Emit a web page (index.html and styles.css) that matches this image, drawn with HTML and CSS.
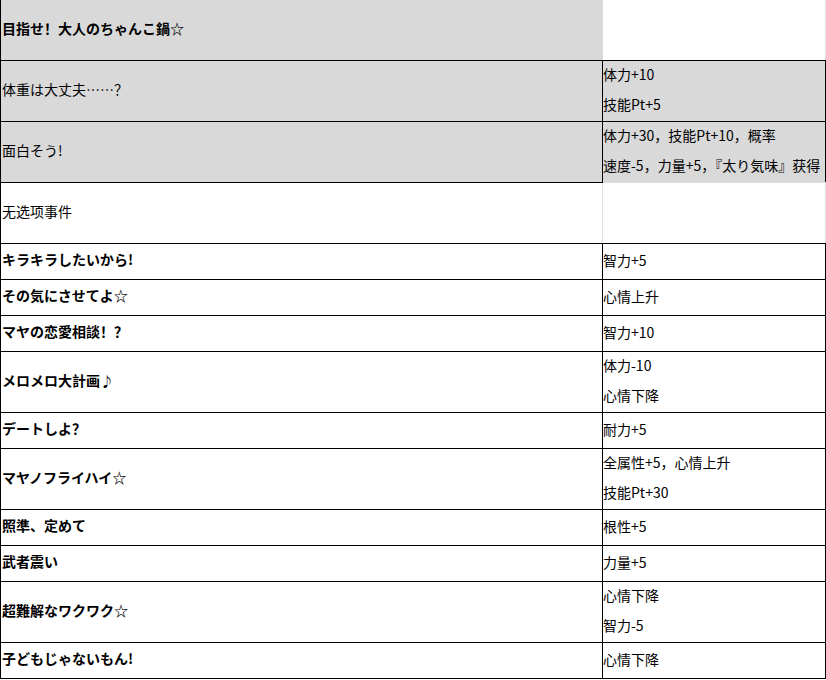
FILE: index.html
```html
<!DOCTYPE html>
<html lang="zh">
<head>
<meta charset="utf-8">
<title>イベント選択肢</title>
<link rel="stylesheet" href="styles.css">
</head>
<body>
<table class="tbl">
  <colgroup><col class="c1"><col class="c2"></colgroup>
  <tr class="dbl">
    <td class="name b gray first-l">目指せ！大人のちゃんこ鍋☆</td>
    <td class="eff first-r"></td>
  </tr>
  <tr class="dbl">
    <td class="name gray">体重は大丈夫……？</td>
    <td class="eff gray"><div class="ln">体力+10</div><div class="ln">技能Pt+5</div></td>
  </tr>
  <tr class="dbl">
    <td class="name gray">面白そう!</td>
    <td class="eff gray soft-b"><div class="ln">体力+30，技能Pt+10，概率</div><div class="ln">速度-5，力量+5，『太り気味』获得</div></td>
  </tr>
  <tr class="dbl">
    <td class="name soft-r">无选项事件</td>
    <td class="eff soft-rr"></td>
  </tr>
  <tr>
    <td class="name b">キラキラしたいから!</td>
    <td class="eff"><div class="ln">智力+5</div></td>
  </tr>
  <tr>
    <td class="name b">その気にさせてよ☆</td>
    <td class="eff"><div class="ln">心情上升</div></td>
  </tr>
  <tr>
    <td class="name b">マヤの恋愛相談！？</td>
    <td class="eff"><div class="ln">智力+10</div></td>
  </tr>
  <tr class="dbl">
    <td class="name b">メロメロ大計画♪</td>
    <td class="eff"><div class="ln">体力-10</div><div class="ln">心情下降</div></td>
  </tr>
  <tr>
    <td class="name b">デートしよ？</td>
    <td class="eff"><div class="ln">耐力+5</div></td>
  </tr>
  <tr class="dbl">
    <td class="name b">マヤノフライハイ☆</td>
    <td class="eff"><div class="ln">全属性+5，心情上升</div><div class="ln">技能Pt+30</div></td>
  </tr>
  <tr>
    <td class="name b">照準、定めて</td>
    <td class="eff"><div class="ln">根性+5</div></td>
  </tr>
  <tr>
    <td class="name b">武者震い</td>
    <td class="eff"><div class="ln">力量+5</div></td>
  </tr>
  <tr class="dbl">
    <td class="name b">超難解なワクワク☆</td>
    <td class="eff"><div class="ln">心情下降</div><div class="ln">智力-5</div></td>
  </tr>
  <tr>
    <td class="name b">子どもじゃないもん!</td>
    <td class="eff"><div class="ln">心情下降</div></td>
  </tr>
</table>
</body>
</html>
```
FILE: styles.css
```css
html, body {
  margin: 0;
  padding: 0;
  background: #fff;
}
body {
  font-family: "Noto Sans CJK SC", "Noto Sans CJK JP", sans-serif;
  font-size: 14px;
  color: #000;
}
.tbl {
  border-collapse: collapse;
  table-layout: fixed;
  width: 825px;
}
.c1 { width: 602px; }
.c2 { width: 223px; }
.tbl td {
  border: 1px solid #000;
  padding: 0;
  height: 35px;
  vertical-align: middle;
  white-space: nowrap;
  overflow: hidden;
}
.tbl tr.dbl td { height: 60px; }
.tbl td.name {
  height: 30px;
  padding: 0 0 5px 1px;
  font-family: "Noto Sans CJK JP", "Noto Sans CJK SC", sans-serif;
}
.tbl tr.dbl td.name { height: 55px; }
.b { font-weight: bold; }
.gray { background: #d9d9d9; }
.ln {
  height: 30px;
  line-height: 26px;
}
.first-l {
  border-top-style: none !important;
  border-right-color: #d9d9d9 !important;
}
.first-r {
  border-top-style: none !important;
  border-right-color: #e2e2e2 !important;
}
.soft-b { border-bottom-color: #dedede !important; }
.soft-r { border-right-color: #e0e0e0 !important; }
.soft-rr { border-right-color: #e0e0e0 !important; }
```
